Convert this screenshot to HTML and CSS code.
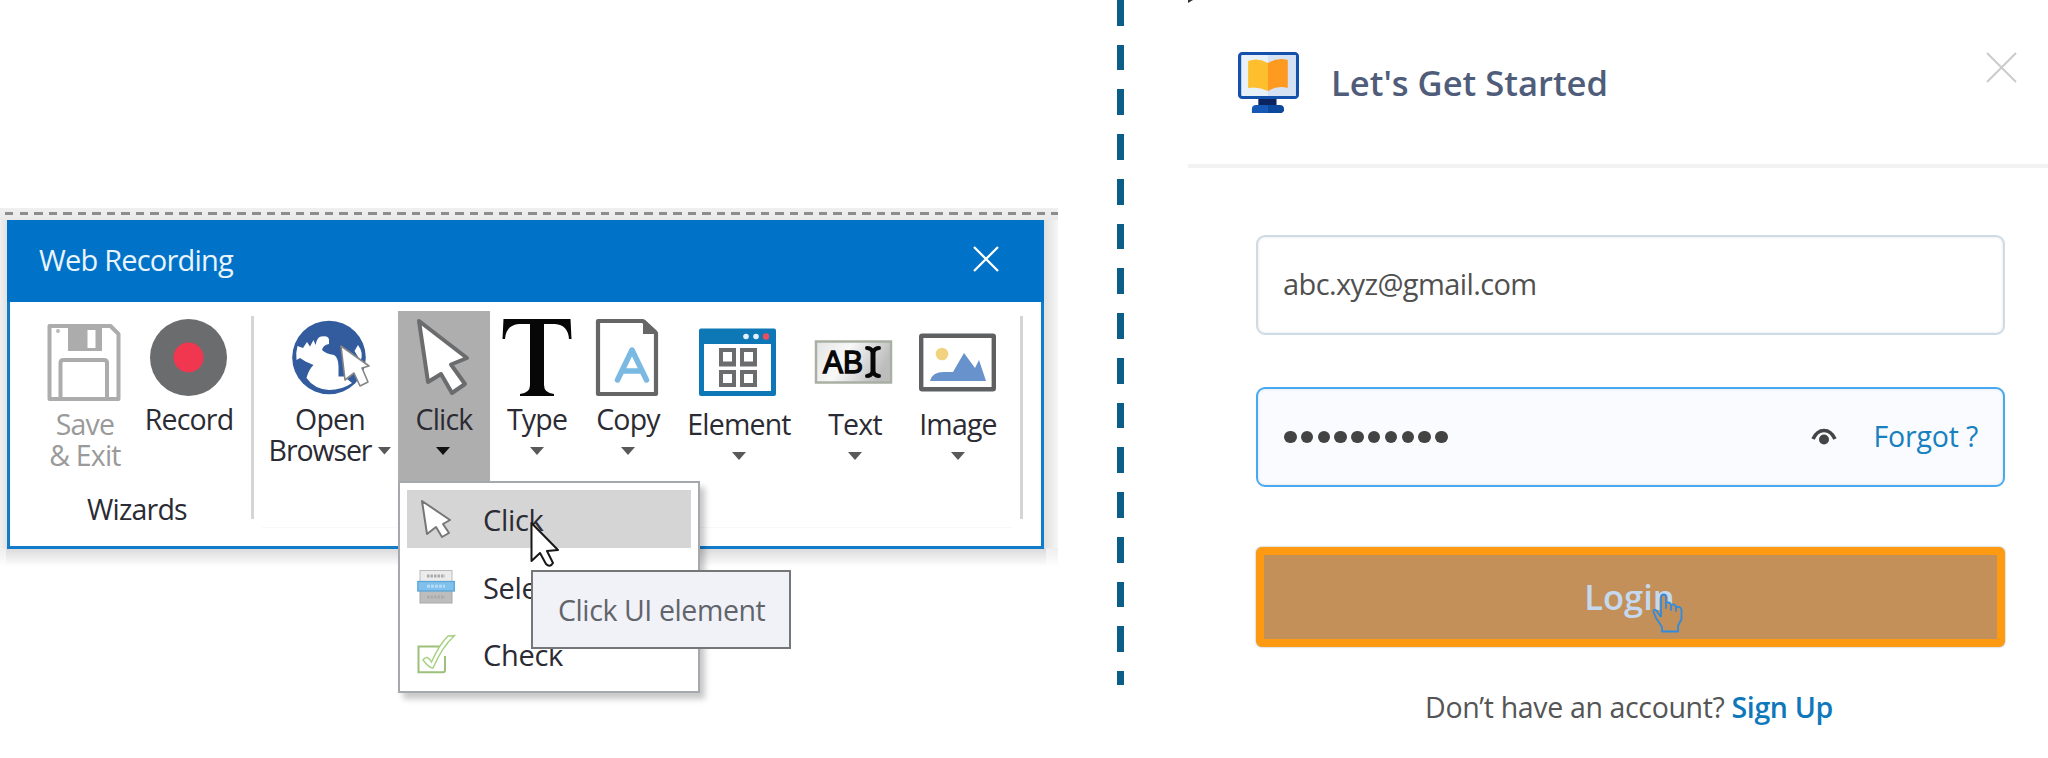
FILE: index.html
```html
<!DOCTYPE html>
<html lang="en">
<head>
<meta charset="utf-8">
<title>Web Recording</title>
<link rel="stylesheet" href="styles.css">
</head>
<body>
<main class="page">
  <section class="recorder">
    <div class="backdrop"></div>
    <div class="window">
      <header class="titlebar">
        <h1 class="titlebar-text">Web Recording</h1>
        <svg class="titlebar-close" viewBox="0 0 28 28"><path d="M2 2L26 26M26 2L2 26" stroke="#fff" stroke-width="2.3"/></svg>
      </header>
      <div class="ribbon">
        <div class="group">
          <div class="tools">
            <div class="tool tool-save">
              <svg class="icon" viewBox="0 0 77 77"><g fill="none" stroke="#acacac" stroke-width="4"><path d="M3.500 2H64.500L72.500 10V75H3.500Z" stroke-linejoin="round"/><path d="M14.500 75V39Q14.500 36 17.500 36H58Q61 36 61 39V75"/></g><path d="M22 2H56V27H22ZM41.500 6V24H49.500V6Z" fill="#acacac" fill-rule="evenodd"/><circle cx="12" cy="7" r="2" fill="#bbb"/></svg>
              <span class="label">Save<br>&amp; Exit</span>
            </div>
            <div class="tool tool-record">
              <svg class="icon" viewBox="0 0 77 77"><circle cx="37.500" cy="38.500" r="38.500" fill="#6b6c6e"/><circle cx="37.500" cy="38.500" r="15" fill="#f0374f"/></svg>
              <span class="label">Record</span>
            </div>
          </div>
          <div class="caption">Wizards</div>
        </div>
        <div class="sep"></div>
        <div class="tools tools-main">
          <div class="tool tool-open">
            <svg class="icon" viewBox="0 0 77 77"><circle cx="37" cy="38.500" r="36.800" fill="#325c9d"/><path d="M5.500 27L11 29L15 23L18 27.500L21.500 21L23.500 26Q25 18 29 17.500Q37 16 37 21V25Q31 26 30 31Q34 35 42 36Q46 38 46.500 47V57.500H52L60 64Q50 71 37 71Q22 70 14.500 59Q17 50 21.500 46L13.500 42.500L8 39L4.500 41Q3.500 34 5.500 27Z" fill="#fff"/><path d="M66 26L62.500 32L68.500 42Q72 34 66 26Z" fill="#fff"/><path d="M49 27L77 47L70 49L76 63L68 67L62 54L53 61Z" fill="#fff" stroke="#858585" stroke-width="1.600" stroke-linejoin="round"/></svg>
            <span class="label">Open<br><span class="with-arrow">Browser<i class="arrow"></i></span></span>
          </div>
          <div class="tool tool-click">
            <svg class="icon" viewBox="0 0 77 77"><path d="M13 2L61 39L45 45.500L59 65L46 74L35 55L22 63Z" fill="#fff" stroke="#6b6c6e" stroke-width="4" stroke-linejoin="round"/></svg>
            <span class="label">Click</span>
            <i class="arrow arrow-dark"></i>
          </div>
          <div class="tool tool-type">
            <svg class="icon" viewBox="0 0 77 77"><path d="M4.500 0H71.500L72.500 20H70Q69 6 56 5H45V66Q45 74 55 75V77H21V75Q31 74 31 66V5H20Q7 6 6 20H3.500Z" fill="#070707"/></svg>
            <span class="label">Type</span>
            <i class="arrow"></i>
          </div>
          <div class="tool tool-copy">
            <svg class="icon" viewBox="0 0 77 77"><path d="M8 2H53L66 14V75H8Z" fill="#fff" stroke="#666" stroke-width="4.200" stroke-linejoin="round"/><path d="M53 1V15H67V12L55 1Z" fill="#666"/><path d="M27.500 61L42 31L56.500 61M32 52H52" fill="none" stroke="#7ab9e2" stroke-width="5.500" stroke-linecap="round" stroke-linejoin="round"/></svg>
            <span class="label">Copy</span>
            <i class="arrow"></i>
          </div>
          <div class="tool tool-element tool-low">
            <svg class="icon icon-left" viewBox="0 0 77 77"><rect y="9.500" width="77" height="67.500" rx="2" fill="#0e78b7"/><path d="M5 25H72V72H5Z" fill="#fff"/><circle cx="47" cy="17.500" r="2.800" fill="#e2f1fa"/><circle cx="57" cy="17.500" r="2.800" fill="#e2f1fa"/><circle cx="67" cy="17.500" r="3.200" fill="#ec4e5e"/><g fill="none" stroke="#6b6c6e" stroke-width="4"><rect x="22" y="31" width="13" height="14.500"/><rect x="43" y="31" width="13" height="14.500"/><rect x="22" y="53" width="13" height="13"/><rect x="43" y="53" width="13" height="13"/></g><path d="M22 44h13M43 44h13" stroke="#6b6c6e" stroke-width="3"/></svg>
            <span class="label">Element</span>
            <i class="arrow"></i>
          </div>
          <div class="tool tool-text tool-low">
            <svg class="icon icon-left" viewBox="0 0 77 77"><defs><linearGradient id="key" x1="0" y1="0" x2="1" y2=".3"><stop offset="0" stop-color="#e4e4e4"/><stop offset=".45" stop-color="#f8f8f8"/><stop offset="1" stop-color="#bdbdbd"/></linearGradient></defs><rect x="1" y="22.500" width="75" height="41" fill="url(#key)" stroke="#a9b0a3" stroke-width="2.500"/><text x="8" y="54" class="key-text" textLength="40" lengthAdjust="spacingAndGlyphs">AB</text><path d="M52 29Q56 29 58 33Q60 29 64 29M52 57Q56 57 58 53Q60 57 64 57" fill="none" stroke="#080808" stroke-width="4" stroke-linecap="round"/><path d="M58 31V55" stroke="#080808" stroke-width="5"/></svg>
            <span class="label">Text</span>
            <i class="arrow"></i>
          </div>
          <div class="tool tool-image tool-low">
            <svg class="icon icon-left" viewBox="0 0 77 77"><rect x="2.200" y="16.700" width="72.600" height="53.600" rx="1" fill="#fff" stroke="#5f6062" stroke-width="4.400"/><circle cx="23" cy="35" r="6.300" fill="#f1d27f"/><path d="M11 62Q13 53 25 53L34 53L45 34L56 49L60 41L67 62Z" fill="#6792cc"/></svg>
            <span class="label">Image</span>
            <i class="arrow"></i>
          </div>
        </div>
        <div class="sep"></div>
      </div>

      <div class="menu">
        <div class="item item-active">
          <svg class="item-icon" viewBox="0 0 38 38"><path d="M5 1L33 20L26 24L32 33L25 37L19 27L10 34Z" fill="#fff" stroke="#777" stroke-width="2" stroke-linejoin="round"/></svg>
          <span class="item-text">Click</span>
        </div>
        <div class="item">
          <svg class="item-icon" viewBox="0 0 38 38"><rect x="3" y="2.500" width="32" height="13" fill="#ececec" stroke="#bbb"/><rect x="3" y="22" width="32" height="13" fill="#bdbdbd" stroke="#a8a8a8"/><rect x=".8" y="13.500" width="36.500" height="9.500" fill="#80c0ec" stroke="#5ba6d8" stroke-width="1.300"/><path d="M10 8h18M10 29h18" stroke="#aaa" stroke-width="3" stroke-dasharray="2.500 1"/><path d="M10 18.300h18" stroke="#b5dcf6" stroke-width="3" stroke-dasharray="3 1"/></svg>
          <span class="item-text">Select</span>
        </div>
        <div class="item">
          <svg class="item-icon" viewBox="0 0 38 38"><path d="M28 21V35Q28 37.300 26 37.300H1.500V11.500H23" fill="none" stroke="#9dc07c" stroke-width="2"/><path d="M6 25Q10 19 14.500 27Q22 10 31 1L37.300 .7Q25 12 16 33Q12 33 6 25Z" fill="#fff" stroke="#a8d283" stroke-width="1.500"/></svg>
          <span class="item-text">Check</span>
        </div>
      </div>
      <svg class="pointer" viewBox="0 0 30 46"><path d="M1.500 2V40L10 32L16 43Q20 47 23 42L17 30L28 29Z" fill="#fff" stroke="#171717" stroke-width="2" stroke-linejoin="round"/></svg>
      <div class="tooltip">Click UI element</div>
    </div>
  </section>

  <div class="divider"></div>

  <section class="login">
    <svg class="corner" viewBox="0 0 5 3"><path d="M0 0H5L0 3Z" fill="#333"/></svg>
    <header class="login-head">
      <svg class="logo" viewBox="0 0 57 62" preserveAspectRatio="none"><path d="M19 45H36V55H19Z" fill="#0b2460"/><path d="M13 61V57Q13 53 17 53H28V61Z" fill="#1558b5"/><path d="M28 53H39Q43 53 43 57V59L41 61H28Z" fill="#0e489c"/><rect x="1.500" y="1.500" width="54" height="44" rx="2.500" fill="#e8f0f8" stroke="#1351ad" stroke-width="3"/><path d="M28 3H54V44H28Z" fill="#d5e2f3"/><path d="M9.500 9Q19 5 28 11V39Q19 34 9.500 36Z" fill="#fdbf2d"/><path d="M28 11Q37 5 46.500 8V36Q37 33 28 39Z" fill="#ff9a20"/></svg>
      <h2 class="login-title">Let's Get Started</h2>
      <svg class="login-close" viewBox="0 0 31 31"><path d="M1 1L30 30M30 1L1 30" stroke="#cbcbcb" stroke-width="2"/></svg>
    </header>
    <div class="form">
      <div class="field"><span class="field-email">abc.xyz@gmail.com</span></div>
      <div class="field field-focus">
        <span class="dots"><i></i><i></i><i></i><i></i><i></i><i></i><i></i><i></i><i></i><i></i></span>
        <svg class="eye" viewBox="0 0 26 17"><path d="M2 11Q6 2.500 13 2.500Q20 2.500 24 11" fill="none" stroke="#444" stroke-width="3.600"/><circle cx="13" cy="11.500" r="5" fill="#444"/></svg>
        <a class="forgot">Forgot ?</a>
      </div>
      <div class="submit">
        <span class="submit-text">Login</span>
        <svg class="hand" viewBox="0 0 31 40"><path d="M9 24V4Q9 1.500 11.500 1.500Q14 1.500 14 4V15V10Q18 8 19 12V17V12Q23 10 24 14V18V14Q29 13 29.500 17V26L26 33V38.500H10V34L4 25L1.500 19Q1 16 4 17L9 24" fill="#c29058" stroke="#2f8be0" stroke-width="1.800" stroke-linejoin="round"/></svg>
      </div>
      <p class="signup"><span class="ask">Don’t have an account?</span> <a class="signup-link">Sign Up</a></p>
    </div>
  </section>
</main>
</body>
</html>
```
FILE: styles.css
```css
* { box-sizing: border-box; }
body { margin: 0; background: #fff; font-family: "Open Sans", "Noto Sans", sans-serif; overflow: hidden; }
h1, h2, p { margin: 0; font-weight: 400; }
svg { display: block; flex: none; overflow: visible; }
.page { display: flex; width: 2048px; height: 758px; }

/* Recorder window */
.recorder { position: relative; width: 1117px; padding: 220px 0 0 7px; }
.backdrop {
  position: absolute; left: 0; top: 208px; width: 1058px; height: 358px; overflow: hidden;
  background:
    repeating-linear-gradient(90deg, #8d8d8d 0 8.500px, transparent 8.500px 14.530px) 5px 4px / 1053px 3px no-repeat,
    linear-gradient(#f0f0f0, #e9e9e9) 0 0 / 100% 12px no-repeat,
    linear-gradient(#d9d9d9, #fefefe) 6px 340px / 1040px 18px no-repeat,
    linear-gradient(90deg, #f0f0f0, #e2e2e2 7px, #e0e0e0 1045px, #f6f6f6) 0 12px / 100% 328px no-repeat,
    linear-gradient(#eee, #fefefe) 0 340px / 100% 18px no-repeat;
}
.window { position: relative; width: 1037px; height: 329px; background: #fff; border: 3px solid #127ccb; border-top-width: 0; }
.titlebar { height: 82px; margin: 0 -3px; padding: 0 44px 0 32px; display: flex; align-items: center; justify-content: space-between; background: #0072c8; }
.titlebar-text { margin-bottom: 2px; font-size: 29px; line-height: 40px; letter-spacing: -.8px; color: #e9f4fc; }
.titlebar-close { width: 28px; height: 28px; margin-bottom: 5px; }
.ribbon { display: flex; height: 225px; padding: 9px 0 0 24px; }
.group { width: 208px; }
.tools { display: flex; height: 181px; }
.tools-main { margin-left: 8px; margin-right: 8px; height: 217px; border-bottom: 1px solid #f8f8f8; }
.sep { width: 3px; height: 203px; margin-top: 5px; background: #d5d5d5; }
.group + .sep { margin-left: 9px; }
.tool { display: flex; flex-direction: column; align-items: center; padding-top: 8px; color: #2b2b33; }
.tool .icon { width: 77px; height: 77px; }
.tool .icon-left { margin-left: -3px; }
.label, .caption { font-size: 28.500px; line-height: 31px; text-align: center; white-space: nowrap; letter-spacing: -.8px; }
.label { margin-top: 8px; }
.tool-low .label { margin-top: 13px; }
.caption { width: 206px; margin-top: 2px; color: #2b2b33; }
.arrow { display: block; width: 14px; height: 8px; margin-top: 12px; background: #595959; clip-path: polygon(0 0, 100% 0, 50% 100%); }
.arrow-dark { margin-left: -2px; background: #111; }
.with-arrow { display: inline-flex; align-items: center; gap: 6px; letter-spacing: -1.100px; }
.with-arrow .arrow { margin-top: 0; }
.tool-save { width: 102px; padding-top: 13px; color: #9a9a9a; }
.tool-save .icon { margin-left: -2px; }
.tool-record { width: 106px; }
.tool-open { width: 136px; }
.tool-click { width: 92px; height: 200px; background: #aeaeae; }
.tool-type { width: 94px; }
.tool-copy { width: 88px; }
.tool-element { width: 134px; }
.tool-text { width: 98px; }
.tool-image { width: 108px; }
.tool-image .icon { margin-left: -1px; }
.key-text { font: 400 31px "Liberation Sans", sans-serif; fill: #080808; stroke: #080808; stroke-width: 1.400px; }

/* Dropdown */
.menu { position: absolute; left: 388px; top: 261px; width: 302px; height: 212px; padding: 7px; background: #fff; border: 2px solid #a5a8ac; box-shadow: 5px 6px 6px rgba(0,0,0,.22); }
.item { display: flex; align-items: center; height: 58px; margin-bottom: 9.500px; padding-left: 10px; gap: 28px; font-size: 29px; line-height: 40px; letter-spacing: -.3px; color: #2b2b33; }
.item-text { margin-top: 2px; }
.item-active { background: #d5d5d5; }
.item-icon { width: 38px; height: 38px; }
.pointer { position: absolute; left: 520px; top: 301px; width: 30px; height: 46px; }
.tooltip { position: absolute; left: 521px; top: 350px; width: 260px; height: 79px; padding-left: 25px; border: 2px solid #747678; background: #f0f2f7; color: #62646b; font-size: 28.500px; line-height: 76px; letter-spacing: -.4px; white-space: nowrap; }

/* Dashed divider */
.divider { width: 7px; height: 685px; background: repeating-linear-gradient(#0c5d87 0 25.700px, transparent 25.700px 44.750px); }

/* Login panel */
.login { position: relative; width: 860px; margin-left: 64px; }
.corner { position: absolute; left: 0; top: 0; width: 5px; height: 3px; }
.login-head { display: flex; height: 168px; padding: 52px 31px 0 50px; border-bottom: 4px solid #f2f2f2; }
.logo { width: 61px; height: 62px; }
.login-title { margin-left: 32px; font-size: 34.600px; font-weight: 600; line-height: 62px; color: #4f5d7a; white-space: nowrap; }
.login-close { width: 31px; height: 31px; margin-left: auto; }
.form { width: 749px; margin: 67px 0 0 68px; }
.field { display: flex; align-items: center; height: 100px; margin-bottom: 52px; padding: 0 26px; border: 2px solid #cddbe7; border-radius: 9px; background: #fff; box-shadow: inset 0 0 3px rgba(0,0,0,.12); }
.field-email { margin: -3px 0 0 -1px; font-size: 29px; line-height: 40px; letter-spacing: -.600px; color: #505050; }
.field-focus { margin-bottom: 60px; padding-right: 25px; border-color: #47a9f2; background: #f9fbfe; }
.dots { display: flex; gap: 4.300px; }
.dots i { width: 12.500px; height: 12.500px; border-radius: 50%; background: #434343; }
.eye { width: 26px; height: 17px; margin-left: auto; margin-bottom: 1px; }
.forgot { margin: -3px 0 0 37px; font-size: 28.500px; line-height: 40px; letter-spacing: -.200px; color: #1680c0; white-space: nowrap; }
.submit { position: relative; display: flex; justify-content: center; align-items: center; height: 100px; border: 8px solid #fd9a12; border-radius: 6px; background: #c29058; box-shadow: 0 0 2px #999; }
.submit-text { margin-right: 2px; font-size: 34.500px; font-weight: 600; line-height: 40px; color: #c5d8ee; }
.hand { position: absolute; left: 388px; top: 38px; width: 31px; height: 40px; }
.signup { display: flex; justify-content: center; gap: 7px; margin-top: 40px; padding-right: 3px; font-size: 28.500px; line-height: 40px; letter-spacing: -.350px; white-space: nowrap; color: #555; }
.signup-link { font-weight: 600; color: #0f78ba; }
```
